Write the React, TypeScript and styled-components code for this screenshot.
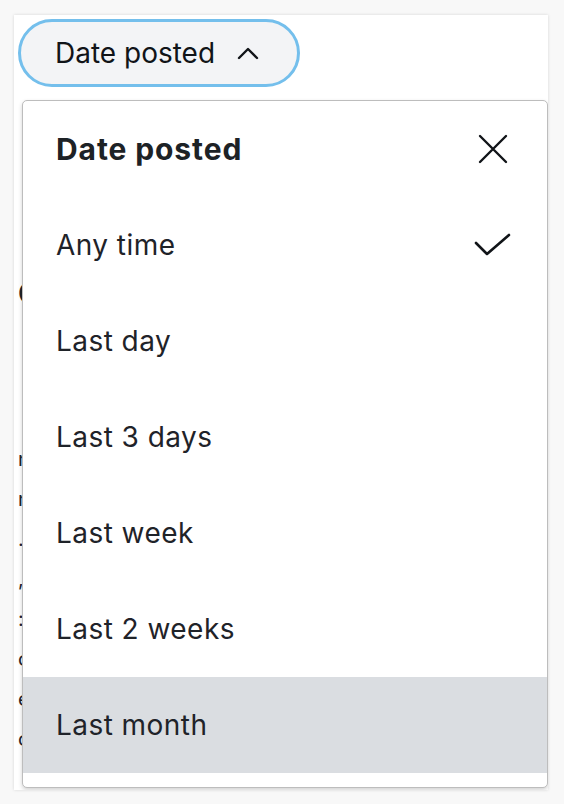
import React from "react";
import styled, { createGlobalStyle } from "styled-components";

const GlobalStyle = createGlobalStyle`
  html, body { margin: 0; padding: 0; }
  body {
    background: #f8f8f8;
    font-family: Inter, "Noto Sans", "Liberation Sans", sans-serif;
    color: #1f2329;
  }
`;

const Page = styled.div`
  width: 564px;
  height: 804px;
  padding: 15px 16px 0 14px;
  box-sizing: border-box;
`;

const Card = styled.div`
  position: relative;
  width: 534px;
  height: 775px;
  background: #fff;
  box-shadow: 0 0 3px rgba(0, 0, 0, 0.14);
  overflow: hidden;
`;

const Chip = styled.button`
  display: flex;
  align-items: center;
  gap: 22px;
  margin: 4px 0 0 4px;
  width: 282px;
  height: 68px;
  box-sizing: border-box;
  padding: 0 0 0 34px;
  border: 3px solid #74bfec;
  border-radius: 34px;
  background: #f3f4f6;
  font-family: inherit;
  font-size: 28px;
  color: #111418;
  cursor: pointer;
`;

const Behind = styled.div`
  display: flex;
  flex-direction: column;
  gap: 16px;
  padding: 18px 0 0 4px;
  font-size: 20px;
  line-height: 24px;
  color: #1f2329;
  white-space: nowrap;
`;

const BehindHeading = styled.div`
  margin-top: 170px;
  font-size: 30px;
  font-weight: 700;
  line-height: 36px;
  margin-bottom: 120px;
`;

const Menu = styled.div`
  position: absolute;
  top: 85px;
  left: 8px;
  right: 0;
  height: 688px;
  box-sizing: border-box;
  background: #fff;
  border: 1px solid #bdbdbd;
  border-radius: 5px;
  box-shadow: 0 2px 4px rgba(0, 0, 0, 0.18);
  display: flex;
  flex-direction: column;
`;

const Header = styled.div`
  display: flex;
  align-items: center;
  justify-content: space-between;
  height: 96px;
  flex: none;
  padding: 0 38px 0 33px;
  font-size: 30px;
  letter-spacing: 0.9px;
  font-weight: 700;
  color: #1d2226;
`;

const Item = styled.div<{ $hover?: boolean }>`
  display: flex;
  align-items: center;
  justify-content: space-between;
  height: 96px;
  flex: none;
  padding: 0 36px 0 33px;
  font-size: 28px;
  letter-spacing: 0.45px;
  color: #1f2329;
  background: ${(p) => (p.$hover ? "#dadde1" : "transparent")};
`;

const IconBtn = styled.span`
  display: flex;
  width: 32px;
  height: 32px;
  align-items: center;
  justify-content: center;
`;

const Chevron = () => (
  <svg width="22" height="14" viewBox="0 0 22 14" fill="none">
    <path d="M2 12 L11 3 L20 12" stroke="#111418" strokeWidth="2.4" strokeLinecap="round" strokeLinejoin="round" />
  </svg>
);

const Close = () => (
  <svg width="32" height="32" viewBox="0 0 32 32" fill="none">
    <path d="M3 3 L29 29 M29 3 L3 29" stroke="#111418" strokeWidth="2.4" strokeLinecap="round" />
  </svg>
);

const Check = () => (
  <svg width="37" height="26" viewBox="0 0 37 26" fill="none">
    <path d="M2 11 L13 22 L35 3" stroke="#111418" strokeWidth="2.6" strokeLinecap="round" strokeLinejoin="round" />
  </svg>
);

const options = ["Any time", "Last day", "Last 3 days", "Last week", "Last 2 weeks", "Last month"];

export default function App() {
  return (
    <>
      <GlobalStyle />
      <Page>
        <Card>
          <Chip>
            <span>Date posted</span>
            <Chevron />
          </Chip>
          <Behind>
            <BehindHeading>Content</BehindHeading>
            <span>n</span>
            <span>n</span>
            <span>.</span>
            <span>,</span>
            <span>:</span>
            <span>o</span>
            <span>e</span>
            <span>c</span>
          </Behind>
          <Menu>
            <Header>
              <span>Date posted</span>
              <IconBtn>
                <Close />
              </IconBtn>
            </Header>
            {options.map((o, i) => (
              <Item key={o} $hover={i === options.length - 1}>
                <span>{o}</span>
                {i === 0 && <Check />}
              </Item>
            ))}
          </Menu>
        </Card>
      </Page>
    </>
  );
}
